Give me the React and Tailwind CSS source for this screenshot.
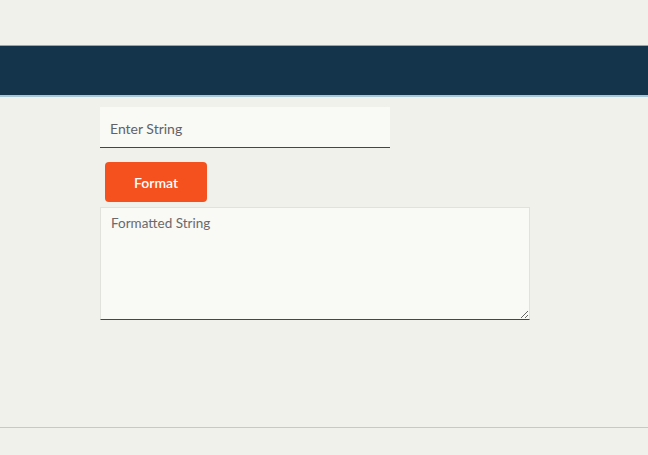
export default function App() {
  return (
    <div className="min-h-[455px] bg-[#f1f1eb] font-['Lato','Noto_Sans',sans-serif] text-[#333]">
      <div className="h-[45px]" />
      <header className="h-[52px] border-t border-[#9aa5ab] border-b-2 border-b-[#a9c6d3] bg-[#14344b]" />
      <main className="flex flex-col items-start pl-[100px] pt-[10px]">
        <input
          placeholder="Enter String"
          className="h-[41px] w-[290px] border-b border-[#2a4e66] bg-[#f9f9f5] px-[10px] pt-[3px] text-[14px] text-[#444] outline-none placeholder:text-[#5f6368]"
        />
        <button className="ml-[5px] mt-[14px] h-[40px] w-[102px] rounded-[4px] bg-[#f4511e] text-[14px] font-semibold text-white">
          Format
        </button>
        <textarea
          placeholder="Formatted String"
          className="mt-[5px] h-[113px] w-[430px] border border-[#e2e2dc] border-b-[#2a4e66] bg-[#f9f9f5] px-[10px] py-[5px] text-[13.5px] text-[#444] outline-none placeholder:text-[#6a6a6a]"
        />
      </main>
      <div className="mt-[107px] border-t border-[#c6c9c6]" />
    </div>
  )
}
